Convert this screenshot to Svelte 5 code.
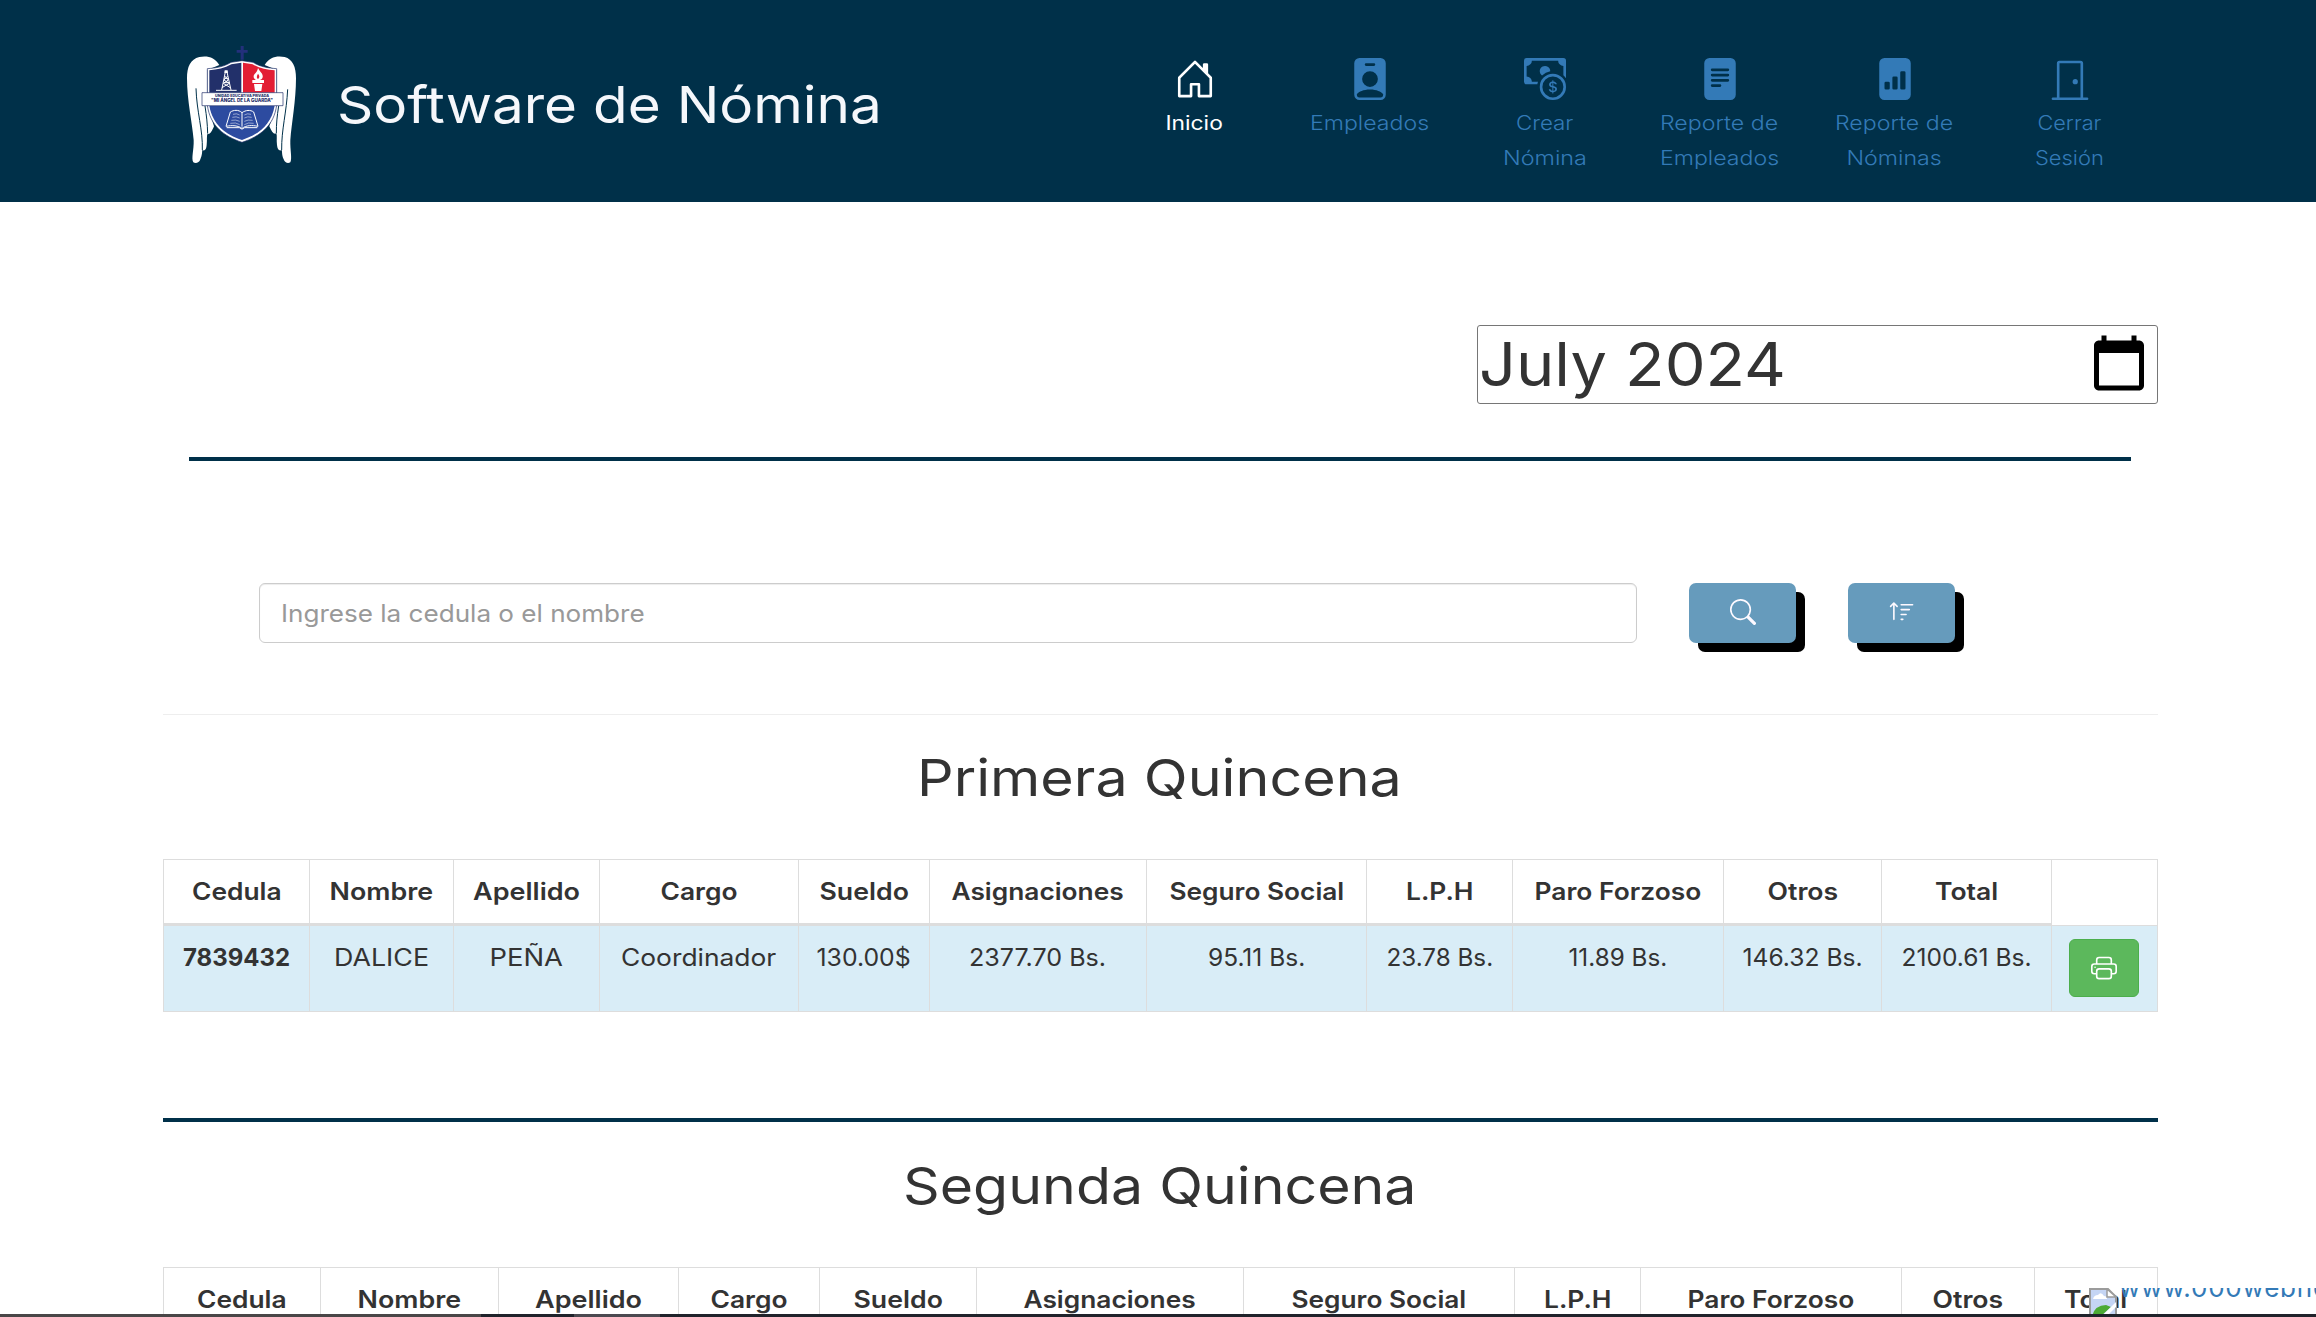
<script>
  const nav = [
    { icon: 'house', lines: [['Inicio', 57]], active: true },
    { icon: 'badge', lines: [['Empleados', 119]] },
    { icon: 'cash', lines: [['Crear', 57], ['Nómina', 84]] },
    { icon: 'text', lines: [['Reporte de', 118], ['Empleados', 119]] },
    { icon: 'graph', lines: [['Reporte de', 118], ['Nóminas', 95]] },
    { icon: 'door', lines: [['Cerrar', 64], ['Sesión', 69]] }
  ];

  const icons = {
    house: ['M8.354 1.146a.5.5 0 0 0-.708 0l-6 6A.5.5 0 0 0 1.5 7.5v7a.5.5 0 0 0 .5.5h4.5a.5.5 0 0 0 .5-.5v-4h2v4a.5.5 0 0 0 .5.5H14a.5.5 0 0 0 .5-.5v-7a.5.5 0 0 0-.146-.354L13 5.793V2.5a.5.5 0 0 0-.5-.5h-1a.5.5 0 0 0-.5.5v1.293zM2.5 14V7.707l5.5-5.5 5.5 5.5V14H10v-4a.5.5 0 0 0-.5-.5h-3a.5.5 0 0 0-.5.5v4z'],
    badge: ['M2 2a2 2 0 0 1 2-2h8a2 2 0 0 1 2 2v12a2 2 0 0 1-2 2H4a2 2 0 0 1-2-2zm4.500 0a.5.5 0 0 0 0 1h3a.5.5 0 0 0 0-1zM8 11a3 3 0 1 0 0-6 3 3 0 0 0 0 6m5 2.755C12.146 12.825 10.623 12 8 12s-4.146.826-5 1.755V14a1 1 0 0 0 1 1h8a1 1 0 0 0 1-1z'],
    cash: [
      'M11 15a4 4 0 1 0 0-8 4 4 0 0 0 0 8m5-4a5 5 0 1 1-10 0 5 5 0 0 1 10 0',
      'M9.438 11.944c.047.596.518 1.06 1.363 1.116v.44h.375v-.443c.875-.061 1.386-.529 1.386-1.207 0-.618-.39-.936-1.09-1.1l-.296-.07v-1.2c.376.043.614.248.671.532h.658c-.047-.575-.54-1.024-1.329-1.073V8.5h-.375v.45c-.747.073-1.255.522-1.255 1.158 0 .562.378.92 1.007 1.066l.248.061v1.272c-.384-.058-.639-.27-.696-.563h-.668zm1.36-1.354c-.369-.085-.569-.26-.569-.522 0-.294.216-.514.572-.578v1.1zm.432.746c.449.104.655.272.655.569 0 .339-.257.571-.709.614v-1.195z',
      'M1 0a1 1 0 0 0-1 1v8a1 1 0 0 0 1 1h4.083q.088-.517.258-1H3a2 2 0 0 0-2-2V3a2 2 0 0 0 2-2h10a2 2 0 0 0 2 2v3.528c.38.34.717.728 1 1.154V1a1 1 0 0 0-1-1z',
      'M9.998 5.083 10 5a2 2 0 1 0-3.132 1.65 6 6 0 0 1 3.13-1.567'
    ],
    text: ['M12 0H4a2 2 0 0 0-2 2v12a2 2 0 0 0 2 2h8a2 2 0 0 0 2-2V2a2 2 0 0 0-2-2M5 4h6a.5.5 0 0 1 0 1H5a.5.5 0 0 1 0-1m-.5 2.500A.5.5 0 0 1 5 6h6a.5.5 0 0 1 0 1H5a.5.5 0 0 1-.5-.5M5 8h6a.5.5 0 0 1 0 1H5a.5.5 0 0 1 0-1m0 2h3a.5.5 0 0 1 0 1H5a.5.5 0 0 1 0-1'],
    graph: ['M12 0H4a2 2 0 0 0-2 2v12a2 2 0 0 0 2 2h8a2 2 0 0 0 2-2V2a2 2 0 0 0-2-2m-2 11.500v-6a.5.5 0 0 1 .5-.5h1a.5.5 0 0 1 .5.5v6a.5.5 0 0 1-.5.5h-1a.5.5 0 0 1-.5-.5m-2.500.5a.5.5 0 0 1-.5-.5v-4a.5.5 0 0 1 .5-.5h1a.5.5 0 0 1 .5.5v4a.5.5 0 0 1-.5.5zm-3 0a.5.5 0 0 1-.5-.5v-2a.5.5 0 0 1 .5-.5h1a.5.5 0 0 1 .5.5v2a.5.5 0 0 1-.5.5z'],
    door: ['M3 2a1 1 0 0 1 1-1h8a1 1 0 0 1 1 1v13h1.500a.5.5 0 0 1 0 1h-13a.5.5 0 0 1 0-1H3zm1 13h8V2H4z', 'M9 9a1 1 0 1 0 2 0 1 1 0 0 0-2 0'],
    search: ['M11.742 10.344a6.500 6.500 0 1 0-1.397 1.398h-.001q.044.060.098.115l3.850 3.850a1 1 0 0 0 1.415-1.414l-3.850-3.850a1 1 0 0 0-.115-.100zM12 6.500a5.500 5.500 0 1 1-11 0 5.500 5.500 0 0 1 11 0'],
    sort: ['M3.500 12.500a.5.5 0 0 1-1 0V3.707L1.354 4.854a.5.5 0 1 1-.708-.708l2-1.999.007-.007a.5.5 0 0 1 .7.006l2 2a.5.5 0 1 1-.707.708L3.500 3.707zm3.500-9a.5.5 0 0 1 .5-.5h7a.5.5 0 0 1 0 1h-7a.5.5 0 0 1-.5-.5M7.500 6a.5.5 0 0 0 0 1h5a.5.5 0 0 0 0-1zm0 3a.5.5 0 0 0 0 1h3a.5.5 0 0 0 0-1zm0 3a.5.5 0 0 0 0 1h1a.5.5 0 0 0 0-1z'],
    printer: [
      'M2.500 8a.5.5 0 1 0 0-1 .5.5 0 0 0 0 1',
      'M5 1a2 2 0 0 0-2 2v2H2a2 2 0 0 0-2 2v3a2 2 0 0 0 2 2h1v1a2 2 0 0 0 2 2h6a2 2 0 0 0 2-2v-1h1a2 2 0 0 0 2-2V7a2 2 0 0 0-2-2h-1V3a2 2 0 0 0-2-2zM4 3a1 1 0 0 1 1-1h6a1 1 0 0 1 1 1v2H4zm1 5a2 2 0 0 0-2 2v1H2a1 1 0 0 1-1-1V7a1 1 0 0 1 1-1h12a1 1 0 0 1 1 1v3a1 1 0 0 1-1 1h-1v-1a2 2 0 0 0-2-2zm7 2v3a1 1 0 0 1-1 1H5a1 1 0 0 1-1-1v-3a1 1 0 0 1 1-1h6a1 1 0 0 1 1 1'
    ]
  };

  const heads = [
    ['Cedula', 90], ['Nombre', 104], ['Apellido', 107], ['Cargo', 77], ['Sueldo', 89],
    ['Asignaciones', 172], ['Seguro Social', 175], ['L.P.H', 67], ['Paro Forzoso', 167],
    ['Otros', 71], ['Total', 63]
  ];
  const firstCols = [146, 144, 146, 199, 131, 217, 220, 146, 211, 158, 170, 107];
  const secondCols = [157, 178, 180, 141, 157, 267, 271, 126, 261, 133, 124];
  const row = [
    ['7839432', 107], ['DALICE', 95], ['PEÑA', 73], ['Coordinador', 155], ['130.00$', 94],
    ['2377.70 Bs.', 137], ['95.11 Bs.', 97], ['23.78 Bs.', 107], ['11.89 Bs.', 99],
    ['146.32 Bs.', 120], ['2100.61 Bs.', 130]
  ];

  // Stretches a label horizontally to the requested width
  function fit(node, width) {
    node.style.transform = `scaleX(${width / node.offsetWidth})`;
  }
</script>

{#snippet icon(name)}
  <svg class="icon" viewBox="0 0 16 16" fill="currentColor" fill-rule="evenodd" aria-hidden="true">
    {#each icons[name] as d}<path {d} />{/each}
  </svg>
{/snippet}

{#snippet label(text, width)}<span class="fit" use:fit={width}>{text}</span>{/snippet}

<div class="page">
  <header>
    <div class="brand">
      <svg class="crest" viewBox="0 0 450 450" aria-hidden="true">
        <path fill="#fff" d="M148 105C135 82 112 76 88 81C61 88 51 110 51 145C51 210 67 280 71 330C72 360 63 385 70 397C76 402 88 399 91 388C97 375 96 365 97 360C105 364 109 357 110 345C112 330 109 318 113 310C118 316 125 306 132 289L112 225L112 120Z" />
        <path fill="#fff" d="M284 105C297 82 320 76 344 81C368 88 378 110 378 145C378 210 365 280 361 330C360 360 367 385 361 397C354 402 345 399 341 388C335 375 337 365 335 360C327 364 322 357 321 345C319 330 322 318 319 310C312 315 305 306 298 289L320 225L320 120Z" />
        <path fill="none" stroke="#00304a" stroke-width="3" d="M78 175C80 245 99 300 97 360M105 228C110 260 112 280 113 310M353 178C350 245 334 300 335 360M326 228C321 260 319 280 319 310" />
        <path fill="#fff" stroke="#1b2a66" stroke-width="2" d="M216 92L249 97C270 110 294 114 320 116V225C312 288 270 319 216 337C162 319 120 288 112 225V116C138 114 162 110 183 97Z" />
        <path fill="#22306a" d="M214 98L184 103C164 115 142 119 118 121V188H214Z" />
        <path fill="#e31e34" d="M219 98L248 103C268 115 290 119 314 121V188H219Z" />
        <path fill="#2d4ba0" d="M118 227H314C304 284 266 313 216 330C166 313 128 284 118 227Z" />
        <path fill="none" stroke="#fff" stroke-width="3" d="M166 126L155 180M171 126L183 180M163 126H174M164 138L175 150L160 160L181 173M173 138L162 150L178 160L156 173M163 145H174M161 158H178M138 181H200" />
        <path fill="#fff" d="M164 121h9v8h-9zM264 114C270 127 280 130 278 142C277 148 271 151 264 151C256 151 250 146 251 138C252 130 261 130 264 114ZM247 150H282V159H247ZM252 162H277L274 183H255Z" />
        <path fill="#e31e34" d="M264 131q8 10 0 16q-7-5 0-16z" />
        <path fill="#fff" stroke="#1b2a66" stroke-width="2" d="M96 188H339V227H96Z" />
        <text x="216" y="201" text-anchor="middle" textLength="162" lengthAdjust="spacingAndGlyphs" class="motto small">UNIDAD EDUCATIVA PRIVADA</text>
        <text x="216" y="216" text-anchor="middle" textLength="186" lengthAdjust="spacingAndGlyphs" class="motto">"MI ÁNGEL DE LA GUARDA"</text>
        <path fill="none" stroke="#fff" stroke-width="3" d="M216 248C205 238 191 240 181 246L168 289C187 285 205 287 216 295C228 286 246 285 264 289L251 246C241 239 227 240 216 248V290M170 293H208Q216 302 224 293H262" />
        <path fill="none" stroke="#fff" stroke-width="1.5" d="M189 253Q200 249 209 255M187 262Q199 258 209 264M184 271Q198 268 209 274M181 280Q198 276 209 284M243 253Q232 249 223 255M245 262Q233 258 223 264M248 271Q234 268 223 274M251 280Q234 276 223 284" />
        <path fill="#23307c" d="M212 48H221V60H233V68H221V89H212V68H200V60H212Z" />
      </svg>
      <h1>{@render label('Software de Nómina', 545)}</h1>
    </div>
    <nav>
      {#each nav as item}
        <a href="#top" class:active={item.active}>
          {@render icon(item.icon)}
          {#each item.lines as [text, width]}
            <span class="line">{@render label(text, width)}</span>
          {/each}
        </a>
      {/each}
    </nav>
  </header>

  <main>
    <div class="month">
      {@render label('July 2024', 307)}
      <svg viewBox="0 0 24 24" aria-hidden="true"><path d="M20 3h-1V1h-2v2H7V1H5v2H4c-1.100 0-2 .9-2 2v16c0 1.100.9 2 2 2h16c1.100 0 2-.9 2-2V5c0-1.100-.9-2-2-2zm0 18H4V8h16v13z" /></svg>
    </div>
    <div class="rule short"></div>

    <div class="search">
      <div class="field">{@render label('Ingrese la cedula o el nombre', 364)}</div>
      <button class="tool" aria-label="Buscar">{@render icon('search')}</button>
      <button class="tool" aria-label="Ordenar">{@render icon('sort')}</button>
    </div>
    <div class="hair"></div>

    <h2>{@render label('Primera Quincena', 485)}</h2>
    <table>
      <colgroup>{#each firstCols as w}<col style:width="{w}px" />{/each}</colgroup>
      <thead>
        <tr>
          {#each heads as [text, width]}<th>{@render label(text, width)}</th>{/each}
          <th class="blank"></th>
        </tr>
      </thead>
      <tbody>
        <tr>
          {#each row as [text, width]}<td>{@render label(text, width)}</td>{/each}
          <td class="action"><button class="print" aria-label="Imprimir">{@render icon('printer')}</button></td>
        </tr>
      </tbody>
    </table>

    <div class="rule"></div>
    <h2 class="second">{@render label('Segunda Quincena', 514)}</h2>
    <table>
      <colgroup>{#each secondCols as w}<col style:width="{w}px" />{/each}</colgroup>
      <thead>
        <tr>{#each heads as [text, width]}<th>{@render label(text, width)}</th>{/each}</tr>
      </thead>
    </table>
  </main>

  <div class="host">
    <svg viewBox="0 0 28 28" aria-hidden="true">
      <path fill="#c5d5f4" stroke="#9b9b9b" stroke-width="2" d="M1 1H19L27 9V28H1Z" />
      <path fill="#fff" d="M4 11Q5 7 9 7Q12 3 15 8Q18 8 18 11Z" />
      <path fill="#fff" stroke="#9b9b9b" stroke-width="1.5" d="M18 1V9H27Z" />
      <path fill="#4caa35" d="M3 28Q6 17 17 17L22 19L12 28Z" />
      <path fill="#fff" d="M13 28L27 14V19L18 28Z" />
    </svg>
    <div class="hostname"><span>www.000webhost.com</span></div>
  </div>
  <div class="taskbar"><i></i><b></b></div>
</div>

<style>
  :global(body) { margin: 0; overflow: hidden; }
  .page {
    position: relative;
    width: 2316px;
    height: 1317px;
    overflow: hidden;
    background: #fff;
    color: #333;
    font-family: Inter, 'Open Sans', sans-serif;
    font-size: 24px;
    line-height: 35px;
  }
  .fit { display: inline-block; white-space: nowrap; }
  .icon { display: block; width: 26px; height: 26px; }

  header {
    box-sizing: border-box;
    height: 202px;
    padding: 30px 159px 0 170px;
    display: flex;
    justify-content: space-between;
    background: #003049;
  }
  .brand { display: flex; color: #f5f7fb; }
  .crest { width: 150px; height: 150px; }
  .motto { font: 800 13px Inter, sans-serif; fill: #1b2a66; }
  .motto.small { font-size: 11px; }
  h1, h2 { margin: 0; font-weight: 400; font-size: 51px; }
  h1 { padding: 45px 0 0 17px; line-height: 60px; }
  h1 .fit, .month .fit, .field .fit { transform-origin: left center; }
  nav { display: flex; padding-top: 28px; }
  nav a {
    width: 175px;
    display: flex;
    flex-direction: column;
    align-items: center;
    color: #337ab7;
    font-size: 20px;
    font-weight: 300;
    text-decoration: none;
  }
  nav a.active { color: #fff; font-weight: 400; }
  nav .icon { width: 42px; height: 42px; margin-bottom: 6px; }
  nav .line { display: block; height: 35px; }

  main { width: 1995px; margin-left: 163px; padding-top: 123px; }
  .month {
    box-sizing: border-box;
    width: 681px;
    height: 79px;
    margin-left: auto;
    padding: 0 8px 0 1px;
    display: flex;
    align-items: center;
    justify-content: space-between;
    border: 1px solid #767676;
    border-radius: 3px;
    font-size: 60px;
    font-weight: 400;
    line-height: 77px;
  }
  .month svg { width: 60px; height: 60px; margin-bottom: 4px; fill: #000; }
  .rule { height: 4px; background: #003049; }
  .rule.short { margin: 53px 27px 0 26px; }
  .search { display: flex; margin: 122px 0 71px 96px; }
  .field {
    box-sizing: border-box;
    width: 1378px;
    height: 60px;
    padding-left: 21px;
    border: 1px solid #ccc;
    border-radius: 6px;
    box-shadow: inset 0 1px 1px rgba(0, 0, 0, 0.075);
    color: #999;
    line-height: 60px;
  }
  button { padding: 0; border: 0; display: flex; justify-content: center; color: #fff; }
  .tool {
    width: 107px;
    height: 60px;
    margin-left: 52px;
    padding-top: 16px;
    border-radius: 7px;
    background: #669bbc;
    box-shadow: 9px 9px #000;
    color: #fdf9ff;
  }
  .hair { height: 1px; background: #eee; }
  h2 { height: 60px; margin: 33px 0 51px; line-height: 60px; text-align: center; }
  h2 .fit { margin-left: -2px; }

  table { width: 1995px; table-layout: fixed; border-spacing: 0; }
  th, td { box-sizing: border-box; padding: 0; border-left: 1px solid #ddd; text-align: center; }
  th:last-child, td:last-child { border-right: 1px solid #ddd; }
  th { height: 67px; border-top: 1px solid #ddd; border-bottom: 3px solid #ddd; font-weight: 600; }
  th.blank { border-bottom-width: 1px; }
  td { height: 86px; padding-top: 14px; border-bottom: 1px solid #ddd; vertical-align: top; background: #d9edf7; }
  td:first-child { font-weight: 700; }
  td.action { padding: 13px 0 0 17px; }
  .print {
    box-sizing: border-box;
    width: 70px;
    height: 58px;
    align-items: center;
    border: 1px solid #4cae4c;
    border-radius: 6px;
    background: #5cb85c;
  }
  table + .rule { margin-top: 106px; }
  h2.second { margin: 34px 0 51px; }

  .host { position: absolute; left: 2089px; top: 1288px; display: flex; }
  .host svg { width: 28px; height: 28px; }
  .hostname { height: 10px; margin-left: 2px; overflow: hidden; color: #337ab7; font-size: 26px; letter-spacing: 0.8px; }
  .hostname span { display: block; margin-top: -18px; white-space: nowrap; }
  .taskbar {
    position: absolute;
    left: 0;
    right: 0;
    bottom: 0;
    height: 3px;
    display: flex;
    background: #20232b;
  }
  .taskbar i { width: 481px; background: #494647; }
  .taskbar b { width: 86px; margin-left: 93px; background: #4b4950; }
</style>
